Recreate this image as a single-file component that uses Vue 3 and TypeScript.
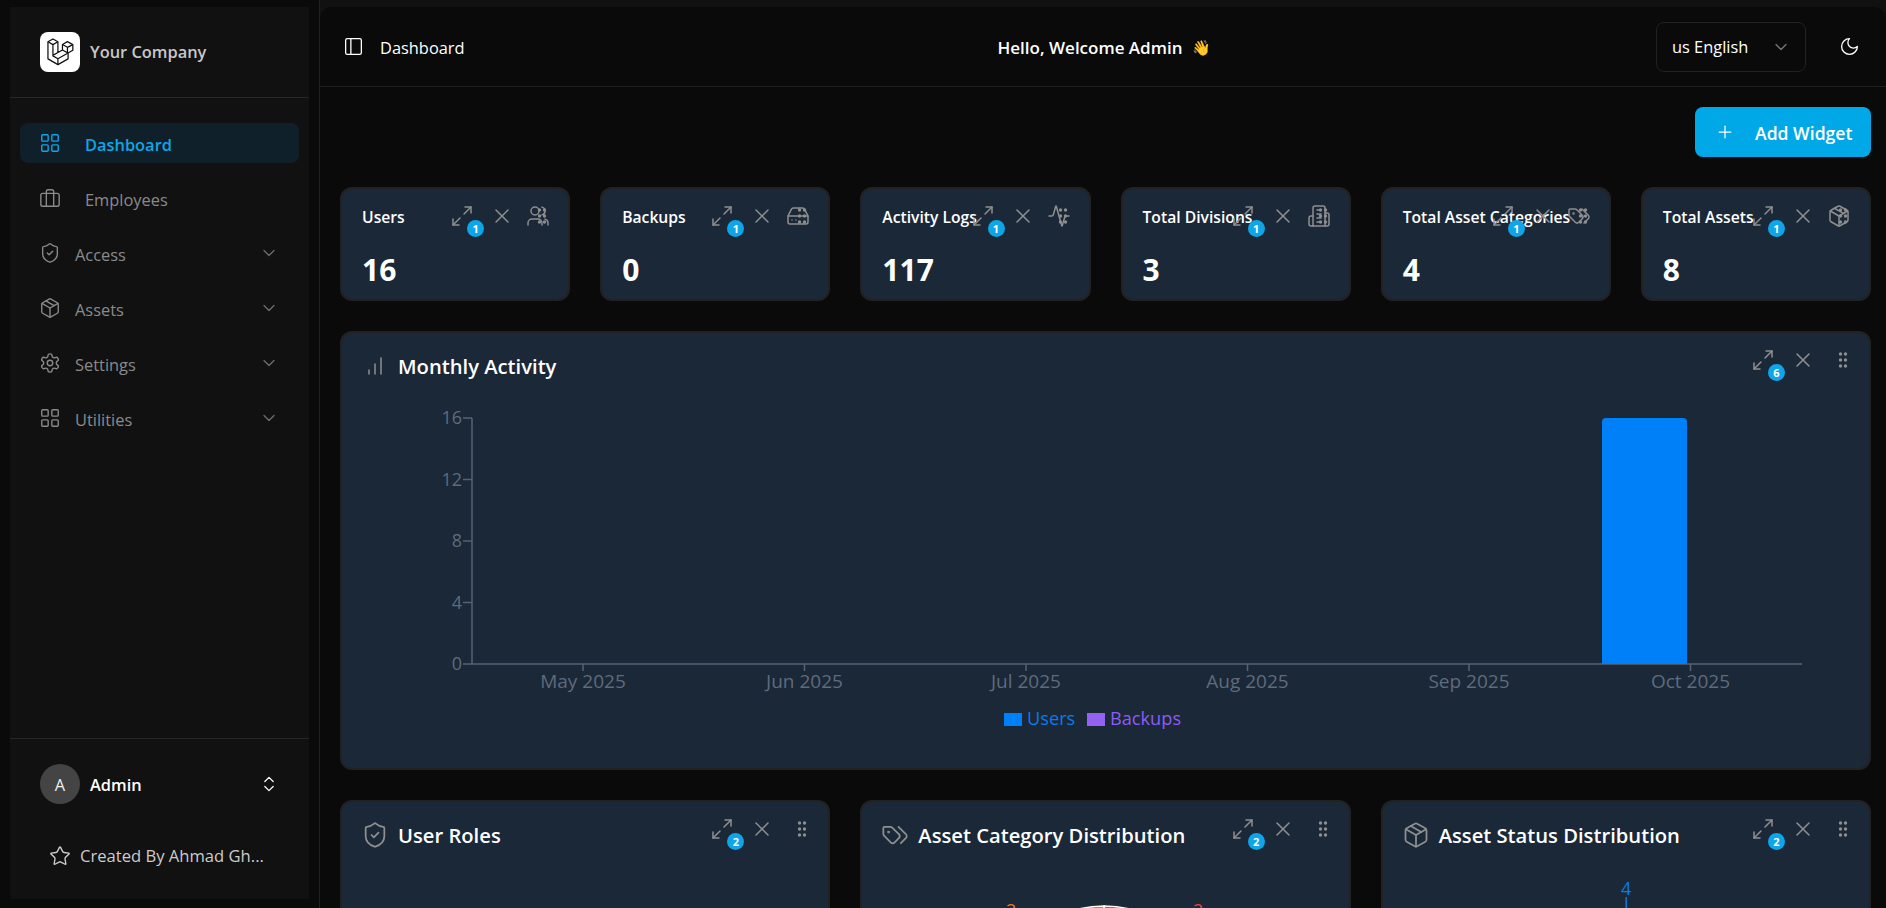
<template>
  <div class="app">
    <aside class="side-wrap">
      <div class="side">
        <div class="brand">
          <span class="logo">
            <svg viewBox="-1 -1 52 54" fill="none" stroke="#111" stroke-width="2.4" stroke-linejoin="round">
              <path d="M.8 6.3 10.4.8 20 6.3V27l8.8-5V11.5L38.4 6l10.4 5.8v10.9L39.6 28v11.2L20 50.4.8 39.2Z" />
              <path d="M.8 6.3l9.6 5.5L20 6.3M10.4 11.8v21.7L20 39l19.6-11M20 39v11.4M20 27l-9.6 5.5M28.8 22l9.6 5.5V17M28.8 11.5l9.6 5.5 10.4-5.2" />
            </svg>
          </span>
          <span class="brand-name">Your Company</span>
        </div>
        <nav class="nav">
          <a v-for="item in navItems" :key="item.label" class="nav-item" :class="{ active: item.active, flat: item.flat }">
            <Icon :name="item.icon" class="nav-icon" />
            <span class="nav-label">{{ item.label }}</span>
            <Icon v-if="!item.flat" name="chevronDown" class="nav-chev" />
          </a>
        </nav>
        <div class="side-foot">
          <div class="user">
            <span class="avatar">A</span>
            <span class="user-name">Admin</span>
            <Icon name="upDown" class="user-chev" />
          </div>
          <div class="credit">
            <Icon name="star" class="credit-icon" />
            <span class="credit-text">Created By Ahmad Gh...</span>
          </div>
        </div>
      </div>
    </aside>

    <div class="inset">
      <main class="main">
        <header class="topbar">
          <div class="top-left">
            <Icon name="panel" class="top-icon" />
            <span class="top-text">Dashboard</span>
          </div>
          <div class="hello">
            <span class="top-text">Hello, Welcome Admin</span>
            <span class="wave">👋</span>
          </div>
          <div class="top-right">
            <div class="lang">
              <span>us English</span>
              <Icon name="chevronDown" class="lang-chev" />
            </div>
            <Icon name="moon" class="top-icon" />
          </div>
        </header>

        <div class="content">
          <div class="actions">
            <button class="add-btn" type="button">
              <Icon name="plus" class="add-icon" />
              <span class="add-text">Add Widget</span>
            </button>
          </div>

          <section class="stats">
            <article v-for="s in stats" :key="s.title" class="card stat">
              <div class="stat-title">{{ s.title }}</div>
              <div class="stat-value">{{ s.value }}</div>
              <Icon :name="s.icon" class="stat-icon" />
              <div class="tools">
                <span class="tool-expand">
                  <Icon name="expand" class="tool-icon" />
                  <b class="badge">1</b>
                </span>
                <Icon name="x" class="tool-icon" />
                <Icon name="grip" class="tool-grip" />
              </div>
            </article>
          </section>

          <section class="card wide">
            <div class="card-head">
              <Icon name="bars" class="head-icon" />
              <h2>Monthly Activity</h2>
            </div>
            <div class="tools">
              <span class="tool-expand">
                <Icon name="expand" class="tool-icon" />
                <b class="badge">6</b>
              </span>
              <Icon name="x" class="tool-icon" />
              <Icon name="grip" class="tool-grip" />
            </div>
            <svg class="chart" viewBox="0 0 1527 360">
              <path :d="`M${axisX} ${yFor(16)}V${y0}H${axisEnd}`" class="axis" />
              <g v-for="t in yTicks" :key="t">
                <path :d="`M${axisX - 9} ${yFor(t)}H${axisX}`" class="axis" />
                <text :x="axisX - 10" :y="yFor(t) + 6" text-anchor="end" class="tick">{{ t }}</text>
              </g>
              <g v-for="m in months" :key="m.label">
                <path :d="`M${m.x} ${y0}v7`" class="axis" />
                <text :x="m.x" :y="y0 + 24" text-anchor="middle" class="tick month">{{ m.label }}</text>
              </g>
              <path :d="`M1260 ${y0}V22a4 4 0 0 1 4-4h77a4 4 0 0 1 4 4V${y0}Z`" fill="#0080f8" />
              <rect x="662" y="313" width="18" height="13" fill="#0080f8" />
              <text x="685" y="325" class="legend" fill="#0a7be8">Users</text>
              <rect x="745" y="313" width="18" height="13" fill="#9561f0" />
              <text x="768" y="325" class="legend" fill="#8b5cf6">Backups</text>
            </svg>
          </section>

          <section class="lower">
            <article v-for="c in lowerCards" :key="c.title" class="card tall">
              <div class="card-head">
                <Icon :name="c.icon" class="head-icon big" />
                <h2>{{ c.title }}</h2>
              </div>
              <div class="tools">
                <span class="tool-expand">
                  <Icon name="expand" class="tool-icon" />
                  <b class="badge">2</b>
                </span>
                <Icon name="x" class="tool-icon" />
                <Icon name="grip" class="tool-grip" />
              </div>
              <svg v-if="c.chart === 'pie'" class="mini" viewBox="0 0 486 300">
                <path d="M242 147V37A110 110 0 0 0 132 147Z" fill="#f97316" stroke="#fff" stroke-width="1.5" />
                <path d="M242 147V37A110 110 0 0 1 352 147Z" fill="#ef4444" stroke="#fff" stroke-width="1.5" />
                <text x="149" y="48" text-anchor="middle" class="tick" style="fill: #f97316">2</text>
                <text x="336" y="48" text-anchor="middle" class="tick" style="fill: #ef4444">2</text>
              </svg>
              <svg v-else-if="c.chart === 'status'" class="mini" viewBox="0 0 486 300">
                <text x="243" y="26" text-anchor="middle" class="tick" style="fill: #0a7be8">4</text>
                <path d="M243 28V90" stroke="#0a7be8" stroke-width="1.5" />
              </svg>
            </article>
          </section>
        </div>
      </main>
    </div>
  </div>
</template>

<script setup lang="ts">
import { h } from 'vue'
import type { FunctionalComponent } from 'vue'

const icons: Record<string, string[]> = {
  grid: [
    'M4 3h5a1 1 0 0 1 1 1v5a1 1 0 0 1-1 1H4a1 1 0 0 1-1-1V4a1 1 0 0 1 1-1z',
    'M15 3h5a1 1 0 0 1 1 1v5a1 1 0 0 1-1 1h-5a1 1 0 0 1-1-1V4a1 1 0 0 1 1-1z',
    'M15 14h5a1 1 0 0 1 1 1v5a1 1 0 0 1-1 1h-5a1 1 0 0 1-1-1v-5a1 1 0 0 1 1-1z',
    'M4 14h5a1 1 0 0 1 1 1v5a1 1 0 0 1-1 1H4a1 1 0 0 1-1-1v-5a1 1 0 0 1 1-1z',
  ],
  briefcase: [
    'M4 7h16a2 2 0 0 1 2 2v10a2 2 0 0 1-2 2H4a2 2 0 0 1-2-2V9a2 2 0 0 1 2-2z',
    'M16 21V5a2 2 0 0 0-2-2h-4a2 2 0 0 0-2 2v16',
  ],
  shield: [
    'M20 13c0 5-3.5 7.5-7.66 8.95a1 1 0 0 1-.67-.01C7.5 20.5 4 18 4 13V6a1 1 0 0 1 1-1c2 0 4.5-1.2 6.24-2.72a1.17 1.17 0 0 1 1.52 0C14.51 3.81 17 5 19 5a1 1 0 0 1 1 1z',
    'm9 12 2 2 4-4',
  ],
  pack: [
    'M21 8a2 2 0 0 0-1-1.73l-7-4a2 2 0 0 0-2 0l-7 4A2 2 0 0 0 3 8v8a2 2 0 0 0 1 1.73l7 4a2 2 0 0 0 2 0l7-4A2 2 0 0 0 21 16Z',
    'm3.3 7 8.7 5 8.7-5',
    'M12 22V12',
    'm7.5 4.27 9 5.15',
  ],
  gear: [
    'M12.22 2h-.44a2 2 0 0 0-2 2v.18a2 2 0 0 1-1 1.73l-.43.25a2 2 0 0 1-2 0l-.15-.08a2 2 0 0 0-2.73.73l-.22.38a2 2 0 0 0 .73 2.73l.15.1a2 2 0 0 1 1 1.72v.51a2 2 0 0 1-1 1.74l-.15.09a2 2 0 0 0-.73 2.73l.22.38a2 2 0 0 0 2.73.73l.15-.08a2 2 0 0 1 2 0l.43.25a2 2 0 0 1 1 1.73V20a2 2 0 0 0 2 2h.44a2 2 0 0 0 2-2v-.18a2 2 0 0 1 1-1.73l.43-.25a2 2 0 0 1 2 0l.15.08a2 2 0 0 0 2.73-.73l.22-.39a2 2 0 0 0-.73-2.73l-.15-.08a2 2 0 0 1-1-1.74v-.5a2 2 0 0 1 1-1.74l.15-.09a2 2 0 0 0 .73-2.73l-.22-.38a2 2 0 0 0-2.73-.73l-.15.08a2 2 0 0 1-2 0l-.43-.25a2 2 0 0 1-1-1.73V4a2 2 0 0 0-2-2z',
    'M15 12a3 3 0 1 1-6 0 3 3 0 1 1 6 0z',
  ],
  chevronDown: ['m6 9 6 6 6-6'],
  upDown: ['m7 15 5 5 5-5', 'm7 9 5-5 5 5'],
  star: [
    'M11.525 2.295a.53.53 0 0 1 .95 0l2.31 4.679a2.123 2.123 0 0 0 1.595 1.16l5.166.756a.53.53 0 0 1 .294.904l-3.736 3.638a2.123 2.123 0 0 0-.611 1.878l.882 5.14a.53.53 0 0 1-.771.56l-4.618-2.428a2.122 2.122 0 0 0-1.973 0L6.396 21.01a.53.53 0 0 1-.77-.56l.881-5.139a2.122 2.122 0 0 0-.611-1.879L2.16 9.795a.53.53 0 0 1 .294-.906l5.165-.755a2.122 2.122 0 0 0 1.597-1.16z',
  ],
  panel: ['M5 3h14a2 2 0 0 1 2 2v14a2 2 0 0 1-2 2H5a2 2 0 0 1-2-2V5a2 2 0 0 1 2-2z', 'M9 3v18'],
  moon: ['M12 3a6 6 0 0 0 9 9 9 9 0 1 1-9-9Z'],
  plus: ['M5 12h14', 'M12 5v14'],
  x: ['M18 6 6 18', 'm6 6 12 12'],
  expand: ['M15 3h6v6', 'M21 3l-7 7', 'M3 21l7-7', 'M3 15v6h6'],
  bars: ['M12 20V10', 'M18 20V4', 'M6 20v-4'],
  tags: [
    'm15 5 6.3 6.3a2.4 2.4 0 0 1 0 3.4L17 19',
    'M9.586 5.586A2 2 0 0 0 8.172 5H3a1 1 0 0 0-1 1v5.172a2 2 0 0 0 .586 1.414L8.29 18.29a2.426 2.426 0 0 0 3.42 0l3.58-3.58a2.426 2.426 0 0 0 0-3.42z',
    'M7 9.5a.5.5 0 1 1-1 0 .5.5 0 1 1 1 0z',
  ],
  users: [
    'M16 21v-2a4 4 0 0 0-4-4H6a4 4 0 0 0-4 4v2',
    'M13 7a4 4 0 1 1-8 0 4 4 0 1 1 8 0z',
    'M22 21v-2a4 4 0 0 0-3-3.87',
    'M16 3.13a4 4 0 0 1 0 7.75',
  ],
  drive: [
    'M22 12H2',
    'M5.45 5.11 2 12v6a2 2 0 0 0 2 2h16a2 2 0 0 0 2-2v-6l-3.45-6.89A2 2 0 0 0 16.76 4H7.24a2 2 0 0 0-1.79 1.11z',
    'M6 16h.01',
    'M10 16h.01',
  ],
  activity: [
    'M22 12h-2.48a2 2 0 0 0-1.93 1.46l-2.35 8.36a.25.25 0 0 1-.48 0L9.24 2.18a.25.25 0 0 0-.48 0l-2.35 8.36A2 2 0 0 1 4.49 12H2',
  ],
  building: [
    'M6 22V4a2 2 0 0 1 2-2h8a2 2 0 0 1 2 2v18Z',
    'M6 12H4a2 2 0 0 0-2 2v6a2 2 0 0 0 2 2h2',
    'M18 9h2a2 2 0 0 1 2 2v9a2 2 0 0 1-2 2h-2',
    'M10 6h4',
    'M10 10h4',
    'M10 14h4',
    'M10 18h4',
  ],
  grip: ['M9.5 6h.01', 'M14.5 6h.01', 'M9.5 12h.01', 'M14.5 12h.01', 'M9.5 18h.01', 'M14.5 18h.01'],
}

const Icon: FunctionalComponent<{ name: string }> = (props) =>
  h(
    'svg',
    { viewBox: '0 0 24 24', fill: 'none', stroke: 'currentColor', 'stroke-linecap': 'round', 'stroke-linejoin': 'round' },
    icons[props.name].map((d) => h('path', { d })),
  )
Icon.props = ['name']

const navItems = [
  { label: 'Dashboard', icon: 'grid', active: true, flat: true },
  { label: 'Employees', icon: 'briefcase', flat: true },
  { label: 'Access', icon: 'shield' },
  { label: 'Assets', icon: 'pack' },
  { label: 'Settings', icon: 'gear' },
  { label: 'Utilities', icon: 'grid' },
]

const stats = [
  { title: 'Users', value: 16, icon: 'users' },
  { title: 'Backups', value: 0, icon: 'drive' },
  { title: 'Activity Logs', value: 117, icon: 'activity' },
  { title: 'Total Divisions', value: 3, icon: 'building' },
  { title: 'Total Asset Categories', value: 4, icon: 'tags' },
  { title: 'Total Assets', value: 8, icon: 'pack' },
]

const lowerCards = [
  { title: 'User Roles', icon: 'shield', chart: '' },
  { title: 'Asset Category Distribution', icon: 'tags', chart: 'pie' },
  { title: 'Asset Status Distribution', icon: 'pack', chart: 'status' },
]

// chart geometry, in the svg's own pixels
const axisX = 130
const axisEnd = 1460
const y0 = 264
const yTicks = [0, 4, 8, 12, 16]
const yFor = (v: number): number => y0 - (v / 16) * 246
const monthNames = ['May 2025', 'Jun 2025', 'Jul 2025', 'Aug 2025', 'Sep 2025', 'Oct 2025']
const months = monthNames.map((label, i) => ({ label, x: 241 + i * 221.5 }))
</script>

<style scoped>
.app {
  display: flex;
  height: 100vh;
  overflow: hidden;
  background: #0a0a0a;
  color: #fff;
  font-family: 'Open Sans', 'Liberation Sans', sans-serif;
  font-size: 16.4px;
}

svg {
  display: block;
  flex: none;
  stroke-width: 1.5;
}

.side-wrap {
  width: 320px;
  flex: none;
  box-sizing: border-box;
  padding: 7px 10px 9px;
  border-right: 1px solid #222;
}

.side {
  height: 100%;
  display: flex;
  flex-direction: column;
  background: #111;
}

.brand {
  height: 91px;
  flex: none;
  box-sizing: border-box;
  padding: 25px 30px 0;
  display: flex;
  align-items: flex-start;
  gap: 10px;
  border-bottom: 1px solid #262626;
}

.logo {
  width: 40px;
  height: 40px;
  border-radius: 8px;
  background: #fff;
  display: flex;
  align-items: center;
  justify-content: center;
}

.logo svg {
  width: 27px;
  height: 28px;
  stroke-width: 2.4;
}

.brand-name {
  line-height: 40px;
  font-weight: 600;
  color: #c8c8c8;
}

.nav {
  flex: 1;
  padding: 25px 10px 0;
  display: flex;
  flex-direction: column;
  gap: 15px;
}

.nav-item {
  height: 40px;
  display: flex;
  align-items: center;
  padding: 0 20px 0 19px;
  border-radius: 8px;
  color: #8a8a8a;
}

.nav-item.active {
  background: #10202a;
  color: #0ea5e9;
  font-weight: 600;
}

.nav-icon {
  width: 22px;
  height: 22px;
}

.nav-label {
  margin-left: 14px;
  position: relative;
  top: 1px;
}

.nav-item.flat .nav-label {
  margin-left: 24px;
}

.nav-chev {
  width: 20px;
  height: 20px;
  margin-left: auto;
  color: #6e6e6e;
}

.side-foot {
  flex: none;
  border-top: 1px solid #262626;
  padding: 25px 30px 0;
  height: 161px;
  box-sizing: border-box;
}

.user {
  display: flex;
  align-items: center;
  gap: 10px;
}

.avatar {
  width: 40px;
  height: 40px;
  border-radius: 50%;
  background: #444;
  display: flex;
  align-items: center;
  justify-content: center;
  color: #eee;
}

.user-name {
  font-weight: 600;
}

.user-chev {
  width: 20px;
  height: 20px;
  margin-left: auto;
}

.credit {
  margin: 40px 0 0 9px;
  display: flex;
  align-items: center;
  gap: 9px;
  color: #ccc;
  font-size: 16.6px;
}

.credit-icon {
  width: 22px;
  height: 22px;
}

.inset {
  flex: 1;
  min-width: 0;
  background: #111;
  padding-top: 7px;
}

.main {
  height: 100%;
  background: #0a0a0a;
  border-radius: 12px 12px 0 0;
  overflow: hidden;
}

.topbar {
  height: 80px;
  box-sizing: border-box;
  border-bottom: 1px solid #1f1f1f;
  display: grid;
  grid-template-columns: 1fr auto 1fr;
  align-items: center;
  padding: 0 26px 0 23px;
}

.top-left {
  display: flex;
  align-items: center;
  gap: 16px;
}

.top-text {
  padding-top: 2px;
}

.top-icon {
  width: 21px;
  height: 21px;
}

.hello {
  font-size: 17px;
  font-weight: 600;
  display: flex;
  align-items: center;
  gap: 10px;
  padding-left: 6px;
}

.wave {
  font-size: 15px;
}

.top-right {
  display: flex;
  align-items: center;
  justify-content: flex-end;
  gap: 33px;
}

.lang {
  width: 150px;
  height: 50px;
  box-sizing: border-box;
  border: 1px solid #222;
  border-radius: 8px;
  display: flex;
  align-items: center;
  justify-content: space-between;
  padding: 0 14px 0 15px;
}

.lang-chev {
  width: 20px;
  height: 20px;
  color: #777;
}

.content {
  padding: 20px 15px 0 20px;
  display: flex;
  flex-direction: column;
  gap: 30px;
}

.actions {
  display: flex;
  justify-content: flex-end;
}

.add-btn {
  width: 176px;
  height: 50px;
  border: 0;
  border-radius: 8px;
  background: #00a8e8;
  color: #fff;
  font: inherit;
  font-size: 17.6px;
  font-weight: 600;
  display: flex;
  align-items: center;
  padding: 0 0 0 20px;
  gap: 20px;
}

.add-text {
  padding-top: 2px;
}

.add-icon {
  width: 20px;
  height: 20px;
}

.stats {
  display: grid;
  grid-template-columns: repeat(6, 1fr);
  gap: 30px;
}

.card {
  position: relative;
  box-sizing: border-box;
  background: #1a2838;
  border: 2px solid #222;
  border-radius: 12px;
}

.stat {
  height: 114px;
  padding: 14px 20px 0;
}

.stat-title {
  font-size: 15.7px;
  font-weight: 600;
  line-height: 28px;
  white-space: nowrap;
}

.stat-value {
  margin-top: 17px;
  font-size: 30px;
  font-weight: 700;
  line-height: 44px;
}

.stat-icon {
  position: absolute;
  top: 15px;
  right: 18px;
  width: 24px;
  height: 24px;
  color: #8f8f8f;
}

.tools {
  position: absolute;
  top: 15px;
  right: 14px;
  display: flex;
  gap: 16px;
  color: #8f8f8f;
}

.tool-expand {
  position: relative;
  width: 24px;
  height: 24px;
}

.tool-icon {
  width: 24px;
  height: 24px;
}

.tool-grip {
  width: 24px;
  height: 24px;
  stroke-width: 3.4;
}

.badge {
  position: absolute;
  left: 17px;
  top: 16px;
  width: 17px;
  height: 17px;
  border-radius: 50%;
  background: #0ea5e9;
  color: #fff;
  font-size: 11px;
  font-weight: 700;
  line-height: 17px;
  text-align: center;
}

.card-head {
  display: flex;
  align-items: center;
  height: 67px;
  box-sizing: border-box;
  padding: 0 0 2px 21px;
  gap: 11px;
}

.head-icon {
  width: 24px;
  height: 24px;
  color: #8f8f8f;
}

.head-icon.big {
  width: 28px;
  height: 28px;
  margin: 0 -2px;
}

h2 {
  margin: 0;
  font-size: 20.2px;
  font-weight: 600;
  white-space: nowrap;
}

.wide {
  padding-bottom: 8px;
}

.chart {
  width: 100%;
  height: 360px;
}

.axis {
  fill: none;
  stroke: #566273;
  stroke-width: 1.5;
}

.tick {
  font-size: 18px;
  fill: #5f6b7c;
}

.tick.month {
  font-size: 19px;
}

.legend {
  font-size: 18.2px;
}

.lower {
  display: grid;
  grid-template-columns: repeat(3, 1fr);
  gap: 30px;
}

.tall {
  height: 400px;
}

.mini {
  width: 100%;
  height: 300px;
}
</style>

<style>
html,
body {
  margin: 0;
  background: #0a0a0a;
}
</style>
